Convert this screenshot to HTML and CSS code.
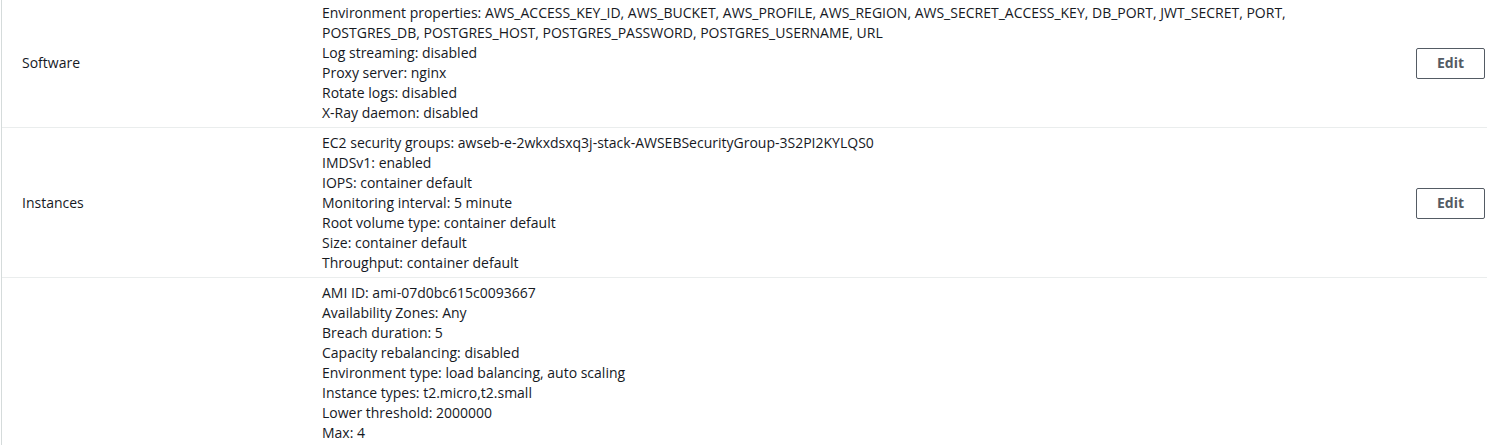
FILE: index.html
```html
<!DOCTYPE html>
<html>
<head>
<meta charset="utf-8">
<link rel="stylesheet" href="styles.css">
</head>
<body>
<div class="table">
  <div class="row first">
    <div class="label">Software</div>
    <div class="values">
      <div>Environment properties: AWS_ACCESS_KEY_ID, AWS_BUCKET, AWS_PROFILE, AWS_REGION, AWS_SECRET_ACCESS_KEY, DB_PORT, JWT_SECRET, PORT, POSTGRES_DB, POSTGRES_HOST, POSTGRES_PASSWORD, POSTGRES_USERNAME, URL</div>
      <div>Log streaming: disabled</div>
      <div>Proxy server: nginx</div>
      <div>Rotate logs: disabled</div>
      <div>X-Ray daemon: disabled</div>
    </div>
    <div class="action"><button class="btn">Edit</button></div>
  </div>
  <div class="row">
    <div class="label">Instances</div>
    <div class="values">
      <div>EC2 security groups: awseb-e-2wkxdsxq3j-stack-AWSEBSecurityGroup-3S2PI2KYLQS0</div>
      <div>IMDSv1: enabled</div>
      <div>IOPS: container default</div>
      <div>Monitoring interval: 5 minute</div>
      <div>Root volume type: container default</div>
      <div>Size: container default</div>
      <div>Throughput: container default</div>
    </div>
    <div class="action"><button class="btn">Edit</button></div>
  </div>
  <div class="row">
    <div class="label"></div>
    <div class="values">
      <div>AMI ID: ami-07d0bc615c0093667</div>
      <div>Availability Zones: Any</div>
      <div>Breach duration: 5</div>
      <div>Capacity rebalancing: disabled</div>
      <div>Environment type: load balancing, auto scaling</div>
      <div>Instance types: t2.micro,t2.small</div>
      <div>Lower threshold: 2000000</div>
      <div>Max: 4</div>
    </div>
    <div class="action"></div>
  </div>
</div>
</body>
</html>
```

FILE: styles.css
```css
html, body {
  margin: 0;
  padding: 0;
  background: #ffffff;
}
body {
  font-family: "Open Sans", "Noto Sans", sans-serif;
  font-size: 14px;
  line-height: 20px;
  color: #16191f;
  overflow: hidden;
}
.table {
  border-left: 1px solid #d5dbdb;
  margin-left: 1px;
}
.row {
  display: grid;
  grid-template-columns: 320px 1030px 1fr;
  align-items: center;
  padding: 5px 0 4px;
  border-bottom: 1px solid #eaeded;
}
.row.first {
  padding-top: 3px;
}
.label {
  padding-left: 20px;
}
.action {
  display: flex;
  justify-content: flex-end;
  padding-right: 2px;
}
.btn {
  font-family: inherit;
  font-size: 14px;
  font-weight: 700;
  line-height: 20px;
  color: #545b64;
  background: #ffffff;
  border: 1px solid #545b64;
  border-radius: 2px;
  padding: 4px 19px;
  width: 69px;
  height: 31px;
  cursor: pointer;
}
```
